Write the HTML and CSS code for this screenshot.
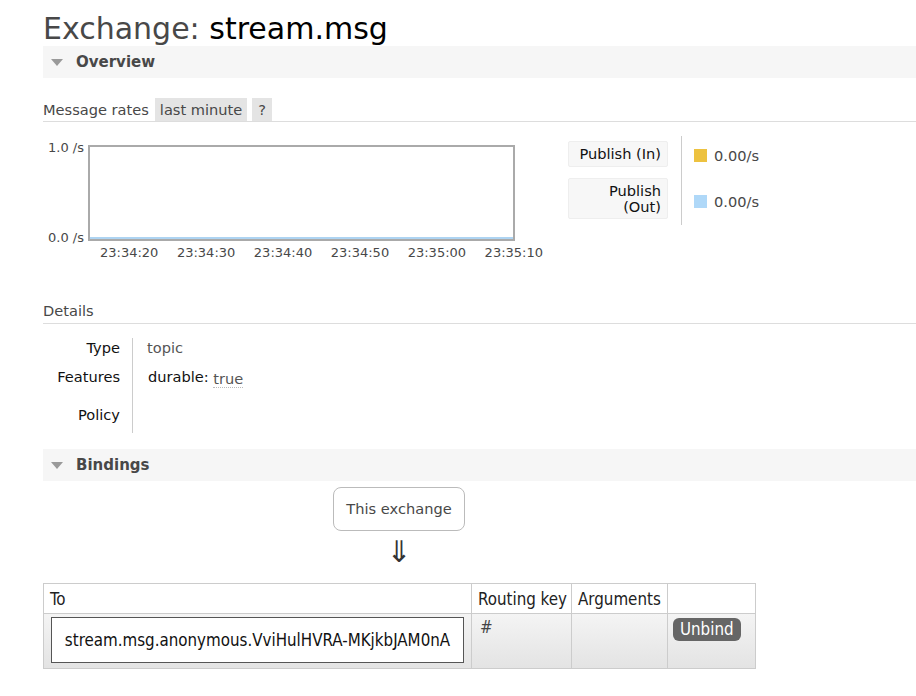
FILE: index.html
```html
<!DOCTYPE html>
<html>
<head>
<meta charset="utf-8">
<link rel="stylesheet" href="styles.css">
</head>
<body>
<div class="main">
  <h1><span class="h-label">Exchange:</span> <b class="h-name">stream.msg</b></h1>

  <div class="section-head"><span class="tri"></span><span class="sh-title">Overview</span></div>

  <div class="rates-bar">
    <span class="rates-label">Message rates</span>
    <span class="pill">last minute</span>
    <span class="pill q">?</span>
  </div>

  <div class="chart-row">
    <div class="chart">
      <div class="y-axis">
        <span>1.0 /s</span>
        <span>0.0 /s</span>
      </div>
      <div class="plot-wrap">
        <div class="plot"><div class="series"></div></div>
        <div class="x-axis">
          <span>23:34:20</span><span>23:34:30</span><span>23:34:40</span><span>23:34:50</span><span>23:35:00</span><span>23:35:10</span>
        </div>
      </div>
    </div>
    <div class="legend">
      <div class="leg-labels">
        <div class="leg-box one">Publish (In)</div>
        <div class="leg-box two">Publish<br>(Out)</div>
      </div>
      <div class="leg-values">
        <div class="leg-val one"><span class="sw yellow"></span>0.00/s</div>
        <div class="leg-val two"><span class="sw blue"></span>0.00/s</div>
      </div>
    </div>
  </div>

  <div class="sub-head">Details</div>
  <div class="details">
    <div class="d-labels">
      <div class="dl r1">Type</div>
      <div class="dl r2">Features</div>
      <div class="dl r3">Policy</div>
    </div>
    <div class="d-values">
      <div class="dv r1 muted">topic</div>
      <div class="dv r2"><span class="key">durable:</span> <span class="abbr">true</span></div>
      <div class="dv r3"></div>
    </div>
  </div>

  <div class="section-head bind"><span class="tri"></span><span class="sh-title">Bindings</span></div>

  <div class="flow">
    <div class="this-ex">This exchange</div>
    <div class="arrow">&#8659;</div>
  </div>

  <table class="bindings">
    <colgroup><col class="w-to"><col class="w-rk"><col class="w-args"><col class="w-act"></colgroup>
    <thead>
      <tr><th>To</th><th>Routing key</th><th>Arguments</th><th></th></tr>
    </thead>
    <tbody>
      <tr>
        <td class="c-to"><div class="dest">stream.msg.anonymous.VviHulHVRA-MKjkbJAM0nA</div></td>
        <td class="c-rk">#</td>
        <td class="c-args"></td>
        <td class="c-act"><span class="btn">Unbind</span></td>
      </tr>
    </tbody>
  </table>
</div>
</body>
</html>
```

FILE: styles.css
```css
* { box-sizing: border-box; }
body {
  margin: 0;
  font-family: "DejaVu Sans", Verdana, sans-serif;
  font-size: 14.6px;
  color: #484848;
  background: #fff;
}
.main { padding-left: 43px; }

h1 {
  margin: 0;
  padding-top: 12px;
  font-size: 30px;
  font-weight: normal;
  line-height: 34px;
  height: 46px;
}
.h-label { color: #484848; }
.h-name { color: #000; font-weight: normal; }

.section-head {
  height: 32px;
  background: #f6f6f6;
  display: flex;
  align-items: center;
  padding-left: 8px;
}
.tri {
  width: 0; height: 0;
  border-left: 6px solid transparent;
  border-right: 6px solid transparent;
  border-top: 7px solid #9a9a9a;
  margin-right: 13px;
  margin-top: 1px;
}
.sh-title { font-weight: bold; font-size: 15px; color: #484848; }

.rates-bar {
  margin-top: 20px;
  display: flex;
  align-items: stretch;
  border-bottom: 1px solid #ddd;
  height: 24px;
}
.rates-label { line-height: 24px; margin-right: 6px; }
.pill {
  background: #e4e4e4;
  padding: 0 5px;
  line-height: 24px;
  margin-right: 5px;
}
.pill.q { padding: 0 6px; }

.chart-row {
  display: flex;
  margin-top: 15px;
  height: 165px;
}
.chart { display: flex; width: 525px; }
.y-axis {
  width: 45px;
  display: flex;
  flex-direction: column;
  justify-content: space-between;
  align-items: flex-end;
  height: 108px;
  padding-top: 3px;
  padding-right: 4px;
  font-size: 13px;
  color: #484848;
}
.plot-wrap { display: flex; flex-direction: column; }
.plot {
  width: 427px;
  height: 96px;
  border: 2px solid #aaa;
  margin-top: 8px;
  position: relative;
  display: flex;
  align-items: flex-end;
}
.series { height: 2px; width: 100%; background: #aed4f2; }
.x-axis {
  display: flex;
  justify-content: space-between;
  width: 455px;
  padding-left: 12px;
  margin-top: 4px;
  font-size: 13px;
}

.legend { display: flex; margin-left: 0; margin-top: -1px; }
.leg-labels {
  display: flex;
  flex-direction: column;
  gap: 11px;
  padding-top: 5px;
  padding-right: 13px;
  border-right: 1px solid #ccc;
  height: 89px;
}
.leg-box {
  width: 100px;
  background: #f7f7f7;
  border: 1px solid #eee;
  border-radius: 2px;
  text-align: right;
  padding: 4px 6px 4px 6px;
  color: #111;
  line-height: 16px;
}
.leg-box.two { padding: 4px 6px 3px 6px; }
.leg-values { padding-left: 12px; padding-top: 5px; }
.leg-val { display: flex; align-items: center; height: 28px; color: #484848; }
.leg-val.two { margin-top: 11px; height: 42px; }
.sw { width: 13px; height: 13px; margin-right: 7px; }
.sw.yellow { background: #edc240; }
.sw.blue { background: #afd8f8; }

.sub-head {
  border-bottom: 1px solid #ddd;
  padding-bottom: 3px;
  line-height: 18px;
}
.details { display: flex; margin-top: 14px; }
.d-labels {
  width: 90px;
  border-right: 1px solid #ccc;
  text-align: right;
  padding-right: 12px;
  color: #111;
}
.dl, .dv { line-height: 20px; }
.r1 { height: 29px; }
.r2 { height: 38px; }
.r3 { height: 28px; }
.d-values { padding-left: 14px; }
.dv.r2 { padding-left: 1px; }
.muted { color: #555; }
.key { color: #111; }
.abbr { color: #555; border-bottom: 1px dotted #bbb; position: relative; top: 2px; }

.section-head.bind { margin-top: 16px; }

.flow { display: flex; flex-direction: column; align-items: center; width: 712px; padding-top: 6px; }
.this-ex {
  border: 1px solid #bbb;
  border-radius: 8px;
  line-height: 42px;
  width: 132px;
  text-align: center;
}
.arrow { font-size: 30px; line-height: 30px; margin-top: 6px; color: #333; }

table.bindings {
  margin-top: 16px;
  border-collapse: collapse;
  table-layout: fixed;
  width: 712px;
  font-family: "DejaVu Sans Condensed", "DejaVu Sans", sans-serif;
  font-size: 16.8px;
}
.w-to { width: 428px; }
.w-rk { width: 100px; }
.w-args { width: 96px; }
.w-act { width: 88px; }
.bindings th, .bindings td { border: 1px solid #ccc; white-space: nowrap; }
.bindings th {
  font-weight: normal;
  text-align: left;
  padding: 0 6px;
  height: 30px;
  color: #222;
}
.bindings tbody tr { background: linear-gradient(#f4f4f4, #e3e3e3); }
.bindings td { vertical-align: top; padding: 4px 6px; height: 55px; color: #444; }
.bindings td.c-to { padding: 3px 7px; }
.dest {
  background: #fff;
  border: 1px solid #555;
  height: 46px;
  line-height: 44px;
  text-align: center;
  color: #111;
}
.bindings td.c-rk { padding: 3px 8px; }
.bindings td.c-act { padding: 4px 5px; }
.btn {
  display: inline-block;
  background: #666;
  color: #fff;
  border-radius: 6px;
  padding: 0 7px;
  line-height: 23px;
}
```
